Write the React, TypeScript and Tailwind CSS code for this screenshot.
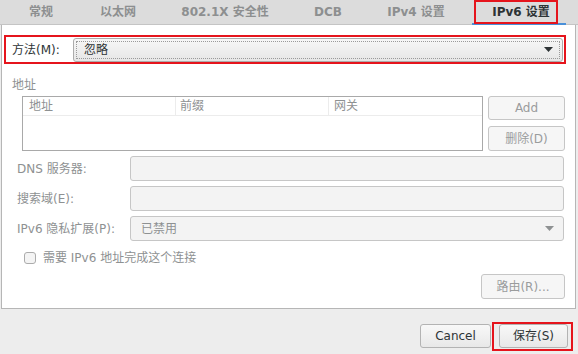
import React from "react";

const FONT = '"DejaVu Sans", "Noto Sans CJK SC", sans-serif';

function Tab({ label, w, active }: { label: string; w: string; active?: boolean }) {
  if (active) {
    return (
      <div className={`relative h-full ${w} flex items-center justify-center`}>
        <div className="absolute left-0 right-0 bottom-[-1px] h-[2px] bg-[#4a90d9]" />
        <div className="absolute left-[2px] top-0 w-[84px] h-[24px] border-2 border-[#e5141c] z-10" />
        <span className="relative text-[12px] font-bold text-[#2e3436] pl-[4px]">{label}</span>
      </div>
    );
  }
  return (
    <div className={`h-full ${w} flex items-center justify-center`}>
      <span className="text-[12px] font-bold text-[#8d8f90]">{label}</span>
    </div>
  );
}

function Arrow({ color }: { color: string }) {
  return (
    <svg width="9" height="5" viewBox="0 0 9 5">
      <path d="M0 0 L9 0 L4.5 5 Z" fill={color} />
    </svg>
  );
}

function FieldRow({ label, children }: { label: string; children?: React.ReactNode }) {
  return (
    <div className="flex items-center h-[25px]">
      <div className="w-[113px] ml-[15px] text-[12px] text-[#8e9192] whitespace-nowrap">{label}</div>
      <div className="w-[434px] h-[25px] bg-[#f3f3f3] border border-[#c6c6c6] rounded-[3px] flex items-center">
        {children}
      </div>
    </div>
  );
}

export default function App() {
  return (
    <div
      className="w-[578px] h-[354px] bg-[#ededed] flex flex-col overflow-hidden"
      style={{ fontFamily: FONT }}
    >
      {/* Tab bar */}
      <div className="h-[25px] bg-[#dcdcdc] border-b border-[#c4c4c4] flex shrink-0">
        <Tab label="常规" w="w-[82px]" />
        <Tab label="以太网" w="w-[72px]" />
        <Tab label="802.1X 安全性" w="w-[142px]" />
        <Tab label="DCB" w="w-[64px]" />
        <Tab label="IPv4 设置" w="w-[112px]" />
        <Tab label="IPv6 设置" w="w-[94px]" active />
      </div>

      {/* Panel */}
      <div className="ml-[1px] w-[575px] h-[284px] bg-white border-l border-r border-b border-[#b6b6b6] flex flex-col shrink-0">
        {/* Method row */}
        <div className="mt-[10px] ml-[2px] w-[562px] h-[29px] border-2 border-[#e5141c] flex items-center">
          <span className="pl-[6px] text-[12px] text-[#2e3436]">方法(M):</span>
          <div className="ml-auto mr-[1px] w-[490px] h-[24px] rounded-[3px] border border-[#acacac] bg-gradient-to-b from-[#f7f7f7] to-[#e6e6e6] p-[2px]">
            <div className="w-full h-full border border-dotted border-[#9a9a9a] flex items-center pl-[7px] pr-[6px]">
              <span className="text-[12px] text-[#2e3436]">忽略</span>
              <span className="ml-auto flex items-center">
                <Arrow color="#2e3436" />
              </span>
            </div>
          </div>
        </div>

        {/* Address header */}
        <div className="mt-[13px] ml-[10px] text-[12px] leading-[16px] text-[#8e9192]">地址</div>

        {/* Table + buttons */}
        <div className="mt-[3px] flex">
          <div className="ml-[20px] w-[461px] h-[55px] border border-[#a9a9a9] bg-white flex flex-col">
            <div className="h-[19px] border-b border-[#ececec] flex text-[12px] text-[#8e9192]">
              <div className="w-[153px] pl-[6px] flex items-center border-r border-[#ececec]">地址</div>
              <div className="w-[153px] pl-[4px] flex items-center border-r border-[#ececec]">前缀</div>
              <div className="flex-1 pl-[5px] flex items-center">网关</div>
            </div>
          </div>
          <div className="ml-[5px] w-[77px] flex flex-col gap-[6px]">
            <div className="h-[24px] rounded-[3px] border border-[#c6c6c6] bg-[#f6f6f6] flex items-center justify-center text-[12px] text-[#9a9c9d]">
              Add
            </div>
            <div className="h-[25px] rounded-[3px] border border-[#c6c6c6] bg-[#f6f6f6] flex items-center justify-center text-[12px] text-[#9a9c9d]">
              删除(D)
            </div>
          </div>
        </div>

        {/* Fields */}
        <div className="mt-[5px] flex flex-col gap-[5px]">
          <FieldRow label="DNS 服务器:" />
          <FieldRow label="搜索域(E):" />
          <FieldRow label="IPv6 隐私扩展(P):">
            <span className="pl-[10px] text-[12px] text-[#8e9192]">已禁用</span>
            <span className="ml-auto mr-[9px] flex items-center">
              <Arrow color="#8e9192" />
            </span>
          </FieldRow>
        </div>

        {/* Checkbox */}
        <div className="mt-[11px] ml-[22px] flex items-center h-[12px]">
          <div className="w-[12px] h-[12px] rounded-[3px] border border-[#acacac] bg-[#f4f4f4]" />
          <span className="ml-[7px] text-[12px] text-[#8e9192] whitespace-nowrap">需要 IPv6 地址完成这个连接</span>
        </div>

        {/* Routes button */}
        <div className="mt-[10px] flex justify-end mr-[10px]">
          <div className="w-[84px] h-[25px] rounded-[3px] border border-[#c6c6c6] bg-[#f6f6f6] flex items-center justify-center text-[12px] text-[#9a9c9d]">
            路由(R)...
          </div>
        </div>
      </div>

      {/* Bottom bar */}
      <div className="mt-[13px] flex justify-end items-start mr-[5px]">
        <div className="mt-[2px] w-[71px] h-[24px] rounded-[3px] border border-[#b3b3b3] bg-gradient-to-b from-[#f8f8f8] to-[#e8e8e8] flex items-center justify-center text-[12px] text-[#2e3436]">
          Cancel
        </div>
        <div className="ml-[1px] w-[81px] h-[29px] border-2 border-[#e5141c] flex">
          <div className="ml-[5px] w-[69px] h-[24px] rounded-[3px] border border-[#b3b3b3] bg-gradient-to-b from-[#f8f8f8] to-[#e8e8e8] flex items-center justify-center text-[12px] text-[#2e3436]">
            保存(S)
          </div>
        </div>
      </div>
    </div>
  );
}
